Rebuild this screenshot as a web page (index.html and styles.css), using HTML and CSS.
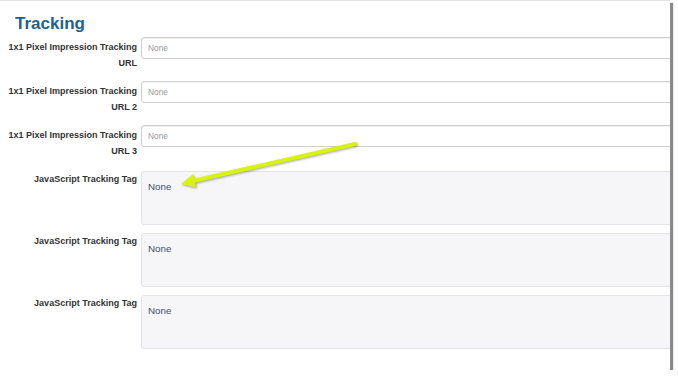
FILE: index.html
```html
<!DOCTYPE html>
<html lang="en">
<head>
    <meta charset="UTF-8">
    <title>Tracking</title>
    <link rel="stylesheet" href="styles.css">
</head>
<body>
    <div class="frame">
        <h2 class="title">Tracking</h2>
        <div class="field">
            <label>1x1 Pixel Impression Tracking URL</label>
            <input type="text" placeholder="None">
        </div>
        <div class="field">
            <label>1x1 Pixel Impression Tracking URL 2</label>
            <input type="text" placeholder="None">
        </div>
        <div class="field">
            <label>1x1 Pixel Impression Tracking URL 3</label>
            <input type="text" placeholder="None">
        </div>
        <div class="field tag first">
            <label>JavaScript Tracking Tag</label>
            <div class="box">None</div>
        </div>
        <div class="field tag">
            <label>JavaScript Tracking Tag</label>
            <div class="box">None</div>
        </div>
        <div class="field tag">
            <label>JavaScript Tracking Tag</label>
            <div class="box">None</div>
        </div>

        <svg class="arrow" width="200" height="60" viewBox="0 0 200 60">
            <line x1="185" y1="9" x2="23" y2="46" stroke="#d9f40c" stroke-width="4" stroke-linecap="round"/>
            <polygon points="11,49 26,52.5 23,39" fill="#d9f40c"/>
        </svg>
    </div>
</body>
</html>
```

FILE: styles.css
```css
* {
    margin: 0;
    padding: 0;
    box-sizing: border-box;
}
body {
    background: #fff;
    font-family: "Liberation Sans", Arial, sans-serif;
}
.frame {
    position: relative;
    width: 670px;
    height: 370px;
    background: #fff;
    border-top: 1px solid #e2e2e2;
    box-shadow: 3px 3px 1px #8a8a8a;
    overflow: hidden;
}
.title {
    font-size: 17px;
    font-weight: bold;
    color: #21628c;
    padding: 13px 0 0 15px;
    height: 36px;
    line-height: 20px;
}
.field {
    display: flex;
    align-items: flex-start;
    margin-bottom: 10px;
}
.field label {
    width: 137px;
    flex-shrink: 0;
    padding: 2px 0 0 0;
    text-align: right;
    font-size: 9px;
    font-weight: bold;
    line-height: 16px;
    color: #333;
}
.field input {
    margin-left: 4px;
    width: 560px;
    flex-shrink: 0;
    height: 22px;
    border: 1px solid #d0d0d0;
    border-radius: 3px;
    padding: 0 6px;
    font-family: "Liberation Sans", Arial, sans-serif;
    font-size: 8.4px;
    outline: none;
    box-shadow: inset 0 1px 1px rgba(0, 0, 0, 0.06);
}
.field input::placeholder {
    color: #999;
}
.field.tag {
    margin-bottom: 8px;
}
.field.tag.first {
    margin-top: 12px;
}
.field.tag label {
    padding-top: 0;
}
.box {
    margin-left: 4px;
    width: 560px;
    flex-shrink: 0;
    height: 54px;
    background: #f6f6f8;
    border: 1px solid #e4e4e8;
    border-radius: 3px;
    padding: 9px 6px;
    font-size: 9.8px;
    color: #3f4f6e;
}
.arrow {
    position: absolute;
    left: 170px;
    top: 134px;
    filter: drop-shadow(1px 1px 1px rgba(0, 0, 0, 0.35));
}
```
